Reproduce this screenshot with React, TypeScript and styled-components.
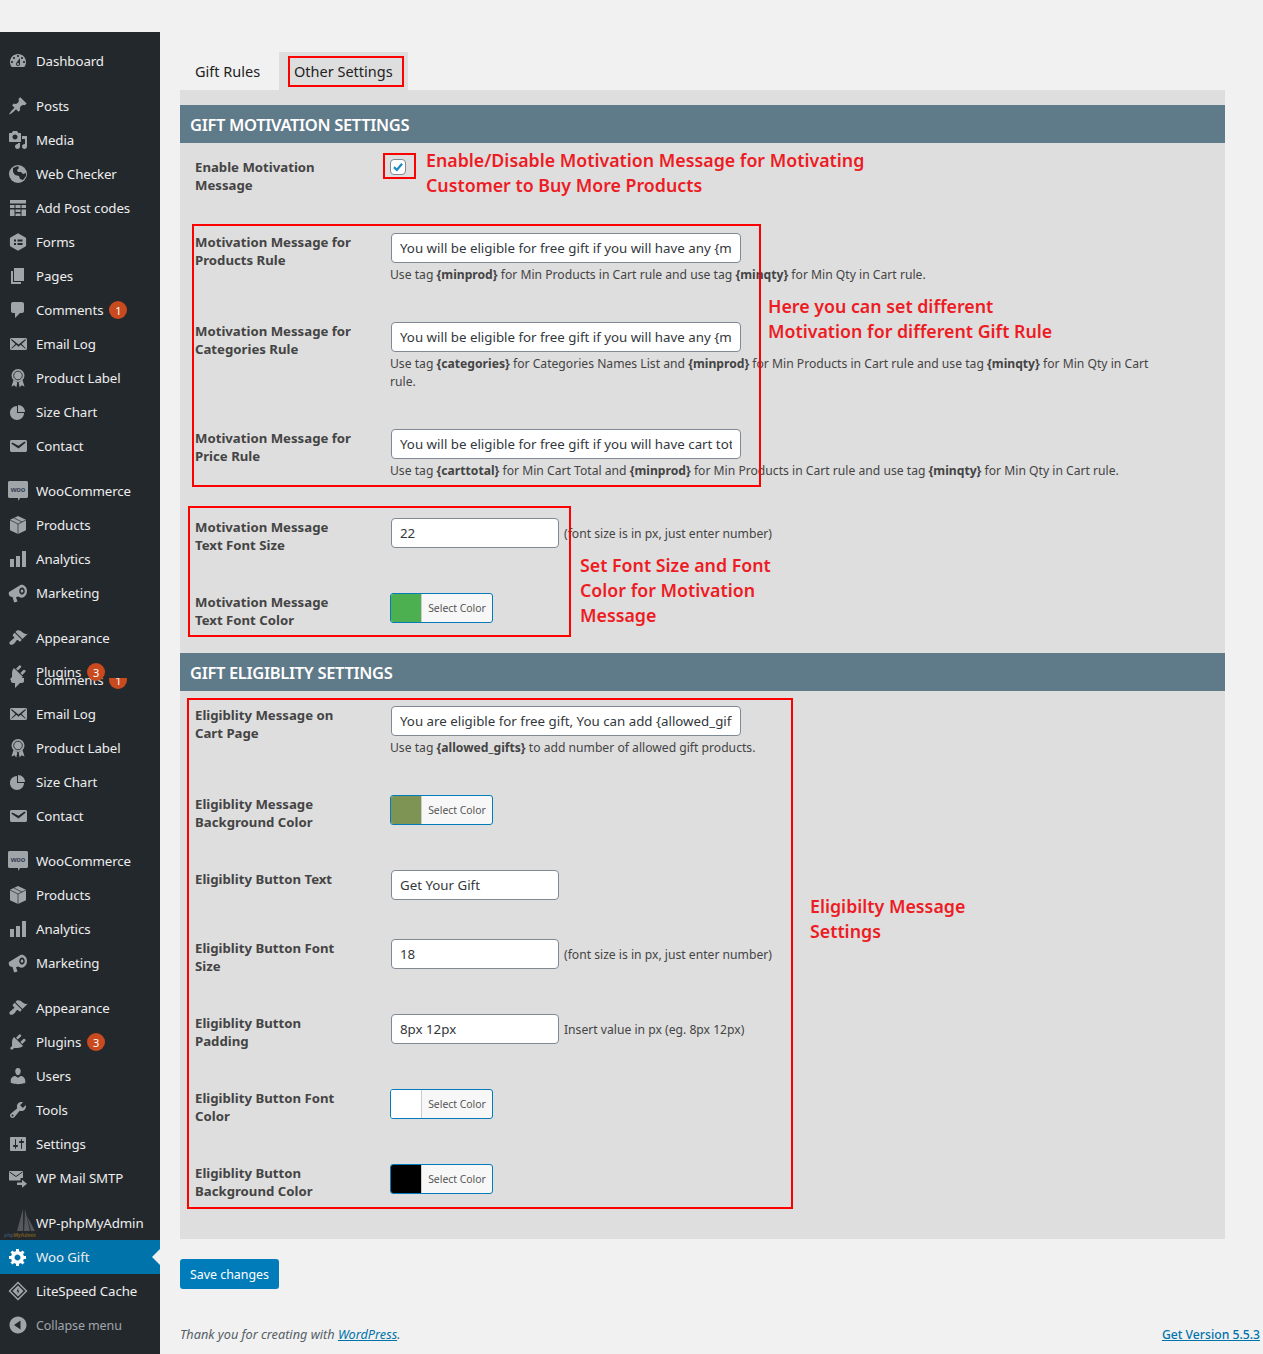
import React from 'react';
import styled, { createGlobalStyle } from 'styled-components';

const FONT = '"Noto Sans", "Open Sans", Arial, sans-serif';

const GlobalStyle = createGlobalStyle`
  html, body {
    margin: 0;
    padding: 0;
    background: #f1f1f1;
    font-family: ${FONT};
    color: #444;
  }
  * { box-sizing: border-box; }
`;

type IconName =
  | 'dashboard' | 'post' | 'media' | 'globe' | 'table' | 'forms' | 'pages' | 'comments' | 'emailAlt' | 'award'
  | 'pie' | 'email' | 'woo' | 'box' | 'bars' | 'megaphone' | 'brush' | 'plug' | 'users' | 'tools' | 'settings'
  | 'smtp' | 'pma' | 'gear' | 'litespeed' | 'collapse';

const PATHS: Partial<Record<IconName, string>> = {
  dashboard:
    'M3.76 16h12.48c1.1-1.37 1.76-3.11 1.76-5 0-4.42-3.58-8-8-8s-8 3.58-8 8c0 1.89.66 3.63 1.76 5zM10 4c.55 0 1 .45 1 1s-.45 1-1 1-1-.45-1-1 .45-1 1-1zM6 6c.55 0 1 .45 1 1s-.45 1-1 1-1-.45-1-1 .45-1 1-1zm8 0c.55 0 1 .45 1 1s-.45 1-1 1-1-.45-1-1 .45-1 1-1zm-5.37 5.55L12 7v6c0 1.1-.9 2-2 2s-2-.9-2-2c0-.57.24-1.08.63-1.45zM4 10c.55 0 1 .45 1 1s-.45 1-1 1-1-.45-1-1 .45-1 1-1zm12 0c.55 0 1 .45 1 1s-.45 1-1 1-1-.45-1-1 .45-1 1-1zm-5 3c0-.55-.45-1-1-1s-1 .45-1 1 .45 1 1 1 1-.45 1-1z',
  post:
    'M10.44 3.02l1.82-1.82 6.36 6.35-1.83 1.82c-1.05-.68-2.48-.57-3.41.36l-.75.75c-.92.93-1.04 2.35-.35 3.41l-1.83 1.82-2.41-2.41-2.8 2.79c-.42.42-3.38 2.71-3.8 2.29s1.86-3.39 2.28-3.81l2.79-2.79L4.1 9.36l1.83-1.82c1.05.69 2.48.57 3.4-.36l.75-.75c.93-.92 1.05-2.35.36-3.41z',
  media:
    'M13 11V4c0-.55-.45-1-1-1h-1.67L9 1H5L3.67 3H2c-.55 0-1 .45-1 1v7c0 .55.45 1 1 1h10c.55 0 1-.45 1-1zM7 4.5c1.38 0 2.5 1.12 2.5 2.5S8.38 9.5 7 9.5 4.5 8.38 4.5 7 5.62 4.5 7 4.5zM14 6h5v10.5c0 1.38-1.12 2.5-2.5 2.5S14 17.88 14 16.5s1.12-2.5 2.5-2.5c.17 0 .34.02.5.05V9h-3V6zm-4 8.05V13h2v3.5c0 1.38-1.12 2.5-2.5 2.5S7 17.88 7 16.5 8.12 14 9.5 14c.17 0 .34.02.5.05z',
  table: 'M2 2h16v3.500H2zM2 7h4.500v3H2zM7.500 7h5v3h-5zM13.500 7H18v3h-4.500zM2 11.500h4.500V18H2zM7.500 11.500h5V14h-5zM13.500 11.500H18V18h-4.500zM7.500 15.500h5V18h-5z',
  pages: 'M6 15V2h10v13H6zm-1 1h8v2H3V5h2v11z',
  comments: 'M5 2h9c1.1 0 2 .9 2 2v7c0 1.1-.9 2-2 2h-2l-5 5v-5H5c-1.1 0-2-.9-2-2V4c0-1.1.9-2 2-2z',
  emailAlt:
    'M19 14.5v-9c0-.83-.67-1.5-1.5-1.5H3.49c-.83 0-1.5.67-1.5 1.5v9c0 .83.67 1.5 1.5 1.5H17.5c.83 0 1.5-.67 1.5-1.5zm-1.31-9.11c.33.33.15.67-.03.84L13.6 9.95l3.9 4.06c.12.14.2.36.06.51-.13.16-.43.15-.56.05l-4.37-3.73-2.14 1.95-2.13-1.95-4.37 3.73c-.13.1-.43.11-.56-.05-.14-.15-.06-.37.06-.51l3.9-4.06-4.06-3.72c-.18-.17-.36-.51-.03-.84s.67-.17.95.07l6.24 5.04 6.25-5.04c.28-.24.62-.4.95-.07z',
  pie: 'M10 10V3c3.87 0 7 3.13 7 7h-7zM9 4v7h7c0 3.87-3.13 7-7 7s-7-3.13-7-7 3.13-7 7-7z',
  email:
    'M3.87 4h13.25C18.37 4 19 4.59 19 5.79v8.42c0 1.19-.63 1.79-1.88 1.79H3.87c-1.25 0-1.88-.6-1.88-1.79V5.79c0-1.2.63-1.79 1.88-1.79zm6.62 8.6l6.74-5.53c.24-.2.43-.66.13-1.07-.29-.41-.82-.42-1.17-.17l-5.7 3.86L4.8 6.83c-.35-.25-.88-.24-1.17.17-.3.41-.11.87.13 1.07z',
  bars: 'M18 18V2h-4v16h4zm-6 0V7H8v11h4zm-6 0v-8H2v8h4z',
  megaphone:
    'M1 9l11.500-7c2.500-1 6.500 1.500 6.500 6s-3.500 7.500-6.500 6.500l-2.500-1-2 .8 1.500 4.200-3.300 1-1.700-5.400-2.300-.700C.7 12.500.5 10 1 9zM14 4.500c-1.500 0-2.800 1.600-2.800 3.600s1.300 3.600 2.800 3.600 2.800-1.600 2.800-3.600S15.500 4.500 14 4.500zm0 2c.8 0 1.300.7 1.300 1.600S14.800 9.700 14 9.700s-1.300-.7-1.300-1.600.5-1.600 1.300-1.600z',
  brush:
    'M14.48 11.06L7.41 3.99l1.5-1.5c.5-.56 2.3-.47 3.51.32 1.21.8 1.43 1.28 2.91 2.1 1.18.64 2.45 1.26 4.45.85zm-.71.71L6.7 4.7 4.93 6.47c-.39.39-.39 1.02 0 1.41l1.06 1.06c.39.39.39 1.03 0 1.42-.6.6-1.43 1.11-2.21 1.69-.35.26-.7.53-1.01.84C1.43 13.23.91 15.24 1.91 16.24s3.01.48 4.34-.85c.31-.31.58-.66.84-1.01.58-.78 1.1-1.61 1.69-2.21.39-.39 1.02-.39 1.41 0l1.06 1.06c.39.39 1.02.39 1.41 0z',
  plug:
    'M13.11 4.36L9.87 7.6 8 5.73l3.24-3.24c.35-.34 1.05-.2 1.56.32.52.51.66 1.21.31 1.55zm-8 1.77l.91-1.12 9.01 9.01-1.19.84c-.71.71-2.63 1.16-3.82 1.16H6.14L4.9 17.26c-.59.59-1.54.59-2.12 0-.59-.58-.59-1.53 0-2.12l1.24-1.24v-3.88c0-1.13.4-3.19 1.09-3.89zm7.26 3.97l3.24-3.24c.34-.35 1.04-.21 1.55.31.52.51.66 1.21.31 1.55l-3.24 3.25z',
  users:
    'M10 9.25c-2.27 0-2.73-3.44-2.73-3.44C7 4.02 7.82 2 9.97 2c2.16 0 2.98 2.02 2.71 3.81 0 0-.41 3.44-2.68 3.44zm0 2.57L12.72 10c2.39 0 4.52 2.33 4.52 4.53v2.49s-3.65 1.13-7.24 1.13c-3.65 0-7.24-1.13-7.24-1.13v-2.49c0-2.25 1.94-4.48 4.47-4.48z',
  tools:
    'M16.68 9.77c-1.34 1.34-3.3 1.67-4.95.99l-5.41 6.52c-.99.99-2.59.99-3.58 0s-.99-2.59 0-3.57l6.52-5.42c-.68-1.65-.35-3.61.99-4.95 1.28-1.28 3.12-1.62 4.72-1.06l-2.89 2.89 2.82 2.82 2.86-2.87c.53 1.58.18 3.39-1.08 4.65zM3.81 16.21c.4.39 1.04.39 1.43 0 .4-.4.4-1.04 0-1.43-.39-.4-1.03-.4-1.43 0-.39.39-.39 1.03 0 1.43z',
  settings:
    'M18 16V4c0-.55-.45-1-1-1H3c-.55 0-1 .45-1 1v12c0 .55.45 1 1 1h14c.55 0 1-.45 1-1zM8 11h1c.55 0 1 .45 1 1s-.45 1-1 1H8v1.5c0 .28-.22.5-.5.5s-.5-.22-.5-.5V13H6c-.55 0-1-.45-1-1s.45-1 1-1h1V5.5c0-.28.22-.5.5-.5s.5.22.5.5V11zm5-2h-1c-.55 0-1-.45-1-1s.45-1 1-1h1V5.5c0-.28.22-.5.5-.5s.5.22.5.5V7h1c.55 0 1 .45 1 1s-.45 1-1 1h-1v5.5c0 .28-.22.5-.5.5s-.5-.22-.5-.5V9z',
  gear:
    'M18 12h-2.18c-.17.7-.44 1.35-.81 1.93l1.54 1.54-2.1 2.1-1.54-1.54c-.58.36-1.23.64-1.91.81V19H8v-2.18c-.68-.17-1.33-.45-1.91-.81l-1.54 1.54-2.12-2.12 1.54-1.54c-.36-.58-.64-1.23-.81-1.91H1V9.03h2.17c.17-.7.44-1.35.81-1.94L2.43 5.55l2.1-2.1 1.54 1.54c.58-.37 1.24-.64 1.93-.81V2h3v2.18c.68.17 1.33.44 1.91.81l1.54-1.54 2.12 2.12-1.54 1.54c.36.59.64 1.24.81 1.92H18V12zm-8.500 1.500c1.660 0 3-1.340 3-3s-1.340-3-3-3-3 1.340-3 3 1.340 3 3 3z',
  collapse: 'M10 1.500c4.690 0 8.500 3.810 8.500 8.500s-3.810 8.500-8.500 8.500S1.500 14.690 1.500 10 5.310 1.500 10 1.500zM12.500 14.500v-9L6 10z',
};

const NavGlyph = ({ name }: { name: IconName }) => {
  const ink = '#23282d';
  if (name === 'globe') {
    return (
      <svg viewBox="0 0 20 20" width="20" height="20">
        <circle cx="10" cy="10" r="9" fill="currentColor" />
        <path d="M5 4l5-2 1 2-2 2 1 2 3 0 2 2 3-1 0 3-3 4-3-1-1-3-4-1-2-3z" fill={ink} />
      </svg>
    );
  }
  if (name === 'forms') {
    return (
      <svg viewBox="0 0 20 20" width="20" height="20">
        <path d="M10 1.200l7.500 4.300c.4.200.6.600.6 1v7c0 .4-.2.800-.6 1L10 18.800 2.500 14.500c-.4-.2-.6-.6-.6-1v-7c0-.4.2-.8.6-1z" fill="currentColor" />
        <path d="M6 7.500h2v2H6zM9.500 7.500h5v2h-5zM6 11h2v2H6zM9.500 11h5v2h-5z" fill={ink} />
      </svg>
    );
  }
  if (name === 'box') {
    return (
      <svg viewBox="0 0 20 20" width="20" height="20">
        <path d="M10 1l8 3.800v10.400L10 19l-8-3.800V4.800z" fill="currentColor" />
        <path d="M2 5l8 4 8-4M10 9v10M6 3l8 4" fill="none" stroke={ink} strokeWidth=".7" />
      </svg>
    );
  }
  if (name === 'award') {
    return (
      <svg viewBox="0 0 20 20" width="20" height="20">
        <path d="M5.500 12l-2 6.500 3-1.200 1.800 2.200 1-5zM14.500 12l2 6.500-3-1.200-1.800 2.200-1-5z" fill="currentColor" />
        <circle cx="10" cy="7.500" r="6.500" fill="currentColor" />
        <circle cx="10" cy="7.500" r="4.300" fill="none" stroke={ink} strokeWidth=".9" />
      </svg>
    );
  }
  if (name === 'woo') {
    return (
      <svg viewBox="0 0 20 20" width="20" height="20">
        <path d="M1.500 0h17c.8 0 1.500.7 1.500 1.500v14c0 .8-.7 1.500-1.500 1.500H12l-1.500 3-.5-3H1.500C.7 17 0 16.300 0 15.500v-14C0 .7.700 0 1.500 0z" fill="currentColor" />
        <text x="10" y="11" fontSize="7.500" fontWeight="700" fontFamily="Liberation Sans, sans-serif" textAnchor="middle" fill="#3b3f55">woo</text>
      </svg>
    );
  }
  if (name === 'smtp') {
    return (
      <svg viewBox="0 0 20 20" width="20" height="20">
        <path d="M1 3h13.500l.5.500v6.500h-2.500v2.500H1.500L1 12V3.500z" fill="currentColor" />
        <path d="M1.500 4l6.500 4.500L14.500 4" fill="none" stroke={ink} strokeWidth="1" />
        <path d="M9 14.500h5V11.800l5 4-5 4v-2.700H9z" fill="currentColor" />
      </svg>
    );
  }
  if (name === 'pma') {
    return (
      <svg viewBox="0 0 32 30" width="32" height="30">
        <path d="M19 1L13 23h6zM21 1l-1 22h6zM23 8l4 15h4z" fill="#55585c" />
        <path d="M20 1l-.5 22" stroke="#2c2f33" strokeWidth="1" />
        <text x="0" y="29" fontSize="5.300" fontWeight="700" fontFamily="Liberation Sans, sans-serif">
          <tspan fill="#3e5068">php</tspan>
          <tspan fill="#7a5a20">MyAdmin</tspan>
        </text>
      </svg>
    );
  }
  if (name === 'litespeed') {
    return (
      <svg viewBox="0 0 20 20" width="20" height="20">
        <path d="M10 .5L19.500 10 10 19.500.5 10zM10 2.500L2.500 10l7.500 7.500 7.500-7.500z" fill="currentColor" fillRule="evenodd" />
        <path d="M10 4.500L15.500 10 10 15.500 4.500 10z" fill="currentColor" />
        <path d="M10.500 6.500L8.500 10.500h1.500l-.5 3 2-4h-1.500z" fill={ink} />
      </svg>
    );
  }
  return (
    <svg viewBox="0 0 20 20" width="20" height="20">
      <path d={PATHS[name]} fill="currentColor" fillRule="evenodd" />
    </svg>
  );
};

const TopGap = styled.div`
  height: 32px;
`;

const Layout = styled.div`
  display: flex;
  min-height: 1322px;
`;

const Sidebar = styled.nav`
  flex: none;
  width: 160px;
  padding-top: 12px;
  background: #23282d;
`;

const Gap = styled.div`
  height: 11px;
`;

const NavRow = styled.div<{ $active?: boolean; $muted?: boolean; $short?: boolean }>`
  position: relative;
  display: flex;
  align-items: ${(p) => (p.$short ? 'flex-start' : 'center')};
  height: ${(p) => (p.$short ? '23px' : '34px')};
  padding-top: ${(p) => (p.$short ? '8px' : '0')};
  z-index: ${(p) => (p.$short ? 1 : 0)};
  background: ${(p) => (p.$active ? '#0073aa' : 'transparent')};
  color: ${(p) => (p.$muted ? '#a0a5aa' : '#eee')};
  font-size: ${(p) => (p.$muted ? '12.5px' : '13.3px')};
  letter-spacing: -0.1px;
  white-space: nowrap;

  ${(p) =>
    p.$active &&
    `&::after {
      content: '';
      position: absolute;
      right: 0;
      top: 50%;
      margin-top: -8px;
      border: 8px solid transparent;
      border-right-color: #f1f1f1;
      border-left-width: 0;
    }`}
`;

const NavIcon = styled.span<{ $active?: boolean; $wide?: boolean }>`
  flex: none;
  display: flex;
  justify-content: ${(p) => (p.$wide ? 'flex-end' : 'center')};
  width: 36px;
  color: ${(p) => (p.$active ? '#fff' : '#a0a5aa')};
`;

const Badge = styled.span`
  display: inline-flex;
  align-items: center;
  justify-content: center;
  width: 18px;
  height: 18px;
  margin-left: 6px;
  border-radius: 50%;
  background: #ca4a1f;
  color: #fff;
  font-size: 11px;
  letter-spacing: 0;
`;

const Sliver = styled.div`
  height: 19px;
  overflow: hidden;

  & > div {
    margin-top: -15px;
  }
`;

const Main = styled.main`
  flex: 1;
  min-width: 0;
  padding: 20px 3px 0 20px;
`;

const Tabs = styled.div`
  display: flex;
  gap: 3px;
`;

const Tab = styled.div<{ $on?: boolean }>`
  position: relative;
  height: 38px;
  padding: 0 15px;
  line-height: 39px;
  font-size: 14.5px;
  color: #222;
  background: ${(p) => (p.$on ? '#dedede' : 'transparent')};
  width: ${(p) => (p.$on ? '129px' : '96px')};
  white-space: nowrap;
`;

const Panel = styled.div`
  position: relative;
  width: 1045px;
  padding: 15px 0;
  background: #dedede;
`;

const SectionBar = styled.h2`
  height: 38px;
  margin: 0;
  padding: 1px 10px 0;
  background: #5f7a89;
  color: #fff;
  font-size: 16.5px;
  font-weight: 600;
  line-height: 38px;
  letter-spacing: -0.33px;
`;

const FieldRow = styled.div`
  display: flex;
  padding: 15px 0 24px 15px;
`;

const FieldLabel = styled.label`
  flex: none;
  width: 195px;
  padding-right: 35px;
  font-size: 13.2px;
  font-weight: 700;
  line-height: 18px;
  color: #444;
`;

const FieldControl = styled.div`
  flex: none;
  width: 770px;
  min-height: 30px;
`;

const InlineLine = styled.div`
  display: flex;
  align-items: center;
  gap: 5px;
`;

const TextInput = styled.input<{ $wide?: boolean }>`
  display: block;
  width: ${(p) => (p.$wide ? '350px' : '168px')};
  height: 30px;
  margin-left: 1px;
  padding: 0 8px;
  border: 1px solid #7e8993;
  border-radius: 4px;
  background: #fff;
  color: #32373c;
  font-family: ${FONT};
  font-size: 13.3px;
  outline: none;
`;

const Hint = styled.p`
  margin: 3px 0 -1px;
  font-size: 12.15px;
  line-height: 18px;
  color: #444;
`;

const Suffix = styled.span`
  font-size: 12.15px;
  color: #444;
`;

const Check = styled.span`
  display: flex;
  align-items: center;
  justify-content: center;
  width: 16px;
  height: 16px;
  margin-top: 1px;
  border: 1px solid #7e8993;
  border-radius: 4px;
  background: #fff;
  color: #1e8cbe;
`;

const ColorButton = styled.div`
  display: flex;
  width: 103px;
  height: 30px;
  overflow: hidden;
  border: 1px solid #007cba;
  border-radius: 3px;
  background: #f7f7f7;
`;

const Swatch = styled.span<{ $color: string }>`
  flex: none;
  width: 31px;
  border-right: 1px solid #ccc;
  background: ${(p) => p.$color};
`;

const SwatchText = styled.span`
  flex: 1;
  font-size: 10.4px;
  line-height: 28px;
  text-align: center;
  color: #555;
`;

const RedBox = styled.div<{ $x: number; $y: number; $w: number; $h: number }>`
  position: absolute;
  left: ${(p) => p.$x}px;
  top: ${(p) => p.$y}px;
  width: ${(p) => p.$w}px;
  height: ${(p) => p.$h}px;
  border: 2px solid #f00;
  pointer-events: none;
`;

const RedNote = styled.div<{ $x: number; $y: number }>`
  position: absolute;
  left: ${(p) => p.$x}px;
  top: ${(p) => p.$y}px;
  color: #ed1c24;
  font-size: 17.8px;
  font-weight: 600;
  line-height: 25px;
  white-space: nowrap;
`;

const SaveButton = styled.button`
  display: block;
  width: 99px;
  height: 30px;
  margin-top: 20px;
  padding: 0;
  border: 0;
  border-radius: 3px;
  background: #007cba;
  color: #fff;
  font-family: ${FONT};
  font-size: 12.4px;
`;

const Footer = styled.footer`
  display: flex;
  justify-content: space-between;
  align-items: baseline;
  margin-top: 36px;
  font-size: 12.2px;
  color: #555d66;
`;

const Thanks = styled.span`
  font-size: 12.7px;
  font-style: italic;
  a { color: #0073aa; }
`;

const VersionLink = styled.a`
  color: #0073aa;
  font-weight: 500;
  text-decoration: underline;
`;

type NavItem = { icon: IconName; label: string; badge?: string };

const NAV_TOP: (NavItem | 'gap')[] = [
  { icon: 'dashboard', label: 'Dashboard' },
  'gap',
  { icon: 'post', label: 'Posts' },
  { icon: 'media', label: 'Media' },
  { icon: 'globe', label: 'Web Checker' },
  { icon: 'table', label: 'Add Post codes' },
  { icon: 'forms', label: 'Forms' },
  { icon: 'pages', label: 'Pages' },
  { icon: 'comments', label: 'Comments', badge: '1' },
  { icon: 'emailAlt', label: 'Email Log' },
  { icon: 'award', label: 'Product Label' },
  { icon: 'pie', label: 'Size Chart' },
  { icon: 'email', label: 'Contact' },
  'gap',
  { icon: 'woo', label: 'WooCommerce' },
  { icon: 'box', label: 'Products' },
  { icon: 'bars', label: 'Analytics' },
  { icon: 'megaphone', label: 'Marketing' },
  'gap',
  { icon: 'brush', label: 'Appearance' },
];

const NAV_BOTTOM: (NavItem | 'gap')[] = [
  { icon: 'emailAlt', label: 'Email Log' },
  { icon: 'award', label: 'Product Label' },
  { icon: 'pie', label: 'Size Chart' },
  { icon: 'email', label: 'Contact' },
  'gap',
  { icon: 'woo', label: 'WooCommerce' },
  { icon: 'box', label: 'Products' },
  { icon: 'bars', label: 'Analytics' },
  { icon: 'megaphone', label: 'Marketing' },
  'gap',
  { icon: 'brush', label: 'Appearance' },
  { icon: 'plug', label: 'Plugins', badge: '3' },
  { icon: 'users', label: 'Users' },
  { icon: 'tools', label: 'Tools' },
  { icon: 'settings', label: 'Settings' },
  { icon: 'smtp', label: 'WP Mail SMTP' },
  'gap',
  { icon: 'pma', label: 'WP-phpMyAdmin' },
];

const renderNav = (items: (NavItem | 'gap')[]) =>
  items.map((item, i) =>
    item === 'gap' ? (
      <Gap key={i} />
    ) : (
      <NavRow key={i}>
        <NavIcon $wide={item.icon === 'pma'}>
          <NavGlyph name={item.icon} />
        </NavIcon>
        {item.label}
        {item.badge && <Badge>{item.badge}</Badge>}
      </NavRow>
    ),
  );

const SideMenu = () => (
  <Sidebar>
    {renderNav(NAV_TOP)}
    <NavRow $short>
      <NavIcon>
        <NavGlyph name="plug" />
      </NavIcon>
      Plugins
      <Badge>3</Badge>
    </NavRow>
    <Sliver>
      <NavRow>
        <NavIcon>
          <NavGlyph name="comments" />
        </NavIcon>
        Comments
        <Badge>1</Badge>
      </NavRow>
    </Sliver>
    {renderNav(NAV_BOTTOM)}
    <NavRow $active>
      <NavIcon $active>
        <NavGlyph name="gear" />
      </NavIcon>
      Woo Gift
    </NavRow>
    <NavRow>
      <NavIcon>
        <NavGlyph name="litespeed" />
      </NavIcon>
      LiteSpeed Cache
    </NavRow>
    <NavRow $muted>
      <NavIcon>
        <NavGlyph name="collapse" />
      </NavIcon>
      Collapse menu
    </NavRow>
  </Sidebar>
);

const Field = ({ label, children }: { label: React.ReactNode; children: React.ReactNode }) => (
  <FieldRow>
    <FieldLabel>{label}</FieldLabel>
    <FieldControl>{children}</FieldControl>
  </FieldRow>
);

const ColorPick = ({ color }: { color: string }) => (
  <ColorButton>
    <Swatch $color={color} />
    <SwatchText>Select Color</SwatchText>
  </ColorButton>
);

const PX_NOTE = '(font size is in px, just enter number)';

export default function App() {
  return (
    <>
      <GlobalStyle />
      <TopGap />
      <Layout>
        <SideMenu />
        <Main>
          <Tabs>
            <Tab>Gift Rules</Tab>
            <Tab $on>
              Other Settings
              <RedBox $x={9} $y={4} $w={116} $h={31} />
            </Tab>
          </Tabs>
          <Panel>
            <SectionBar>GIFT MOTIVATION SETTINGS</SectionBar>
            <Field label="Enable Motivation Message">
              <Check>
                <svg viewBox="0 0 16 16" width="15" height="15">
                  <path d="M2.500 8.500l1.900-1.900 2.200 2.200 5-6 2 1.700-6.800 8z" fill="currentColor" />
                </svg>
              </Check>
            </Field>
            <Field label="Motivation Message for Products Rule">
              <TextInput $wide readOnly value="You will be eligible for free gift if you will have any {minprod} products in cart" />
              <Hint>
                Use tag <b>{'{minprod}'}</b> for Min Products in Cart rule and use tag <b>{'{minqty}'}</b> for Min Qty in Cart rule.
              </Hint>
            </Field>
            <Field label="Motivation Message for Categories Rule">
              <TextInput $wide readOnly value="You will be eligible for free gift if you will have any {minprod} products in cart" />
              <Hint>
                Use tag <b>{'{categories}'}</b> for Categories Names List and <b>{'{minprod}'}</b> for Min Products in Cart rule and use tag <b>{'{minqty}'}</b> for Min Qty in Cart rule.
              </Hint>
            </Field>
            <Field label="Motivation Message for Price Rule">
              <TextInput $wide readOnly value="You will be eligible for free gift if you will have cart total {carttotal} in your cart" />
              <Hint>
                Use tag <b>{'{carttotal}'}</b> for Min Cart Total and <b>{'{minprod}'}</b> for Min Products in Cart rule and use tag <b>{'{minqty}'}</b> for Min Qty in Cart rule.
              </Hint>
            </Field>
            <Field label="Motivation Message Text Font Size">
              <InlineLine>
                <TextInput readOnly value="22" />
                <Suffix>{PX_NOTE}</Suffix>
              </InlineLine>
            </Field>
            <Field label="Motivation Message Text Font Color">
              <ColorPick color="#4caf50" />
            </Field>

            <SectionBar>GIFT ELIGIBLITY SETTINGS</SectionBar>
            <Field label="Eligiblity Message on Cart Page">
              <TextInput $wide readOnly value="You are eligible for free gift, You can add {allowed_gifts} products" />
              <Hint>
                Use tag <b>{'{allowed_gifts}'}</b> to add number of allowed gift products.
              </Hint>
            </Field>
            <Field label="Eligiblity Message Background Color">
              <ColorPick color="#7e9455" />
            </Field>
            <Field label="Eligiblity Button Text">
              <TextInput readOnly value="Get Your Gift" />
            </Field>
            <Field label="Eligiblity Button Font Size">
              <InlineLine>
                <TextInput readOnly value="18" />
                <Suffix>{PX_NOTE}</Suffix>
              </InlineLine>
            </Field>
            <Field label="Eligiblity Button Padding">
              <InlineLine>
                <TextInput readOnly value="8px 12px" />
                <Suffix>Insert value in px (eg. 8px 12px)</Suffix>
              </InlineLine>
            </Field>
            <Field label="Eligiblity Button Font Color">
              <ColorPick color="#ffffff" />
            </Field>
            <Field label="Eligiblity Button Background Color">
              <ColorPick color="#000000" />
            </Field>

            <RedBox $x={203} $y={63} $w={33} $h={26} />
            <RedBox $x={12} $y={134} $w={569} $h={263} />
            <RedBox $x={8} $y={416} $w={383} $h={131} />
            <RedBox $x={7} $y={608} $w={606} $h={511} />

            <RedNote $x={246} $y={58}>
              Enable/Disable Motivation Message for Motivating
              <br />
              Customer to Buy More Products
            </RedNote>
            <RedNote $x={588} $y={204}>
              Here you can set different
              <br />
              Motivation for different Gift Rule
            </RedNote>
            <RedNote $x={400} $y={463}>
              Set Font Size and Font
              <br />
              Color for Motivation
              <br />
              Message
            </RedNote>
            <RedNote $x={630} $y={804}>
              Eligibilty Message
              <br />
              Settings
            </RedNote>
          </Panel>
          <SaveButton>Save changes</SaveButton>
          <Footer>
            <Thanks>
              Thank you for creating with <a href="#wp">WordPress</a>.
            </Thanks>
            <VersionLink href="#version">Get Version 5.5.3</VersionLink>
          </Footer>
        </Main>
      </Layout>
    </>
  );
}
